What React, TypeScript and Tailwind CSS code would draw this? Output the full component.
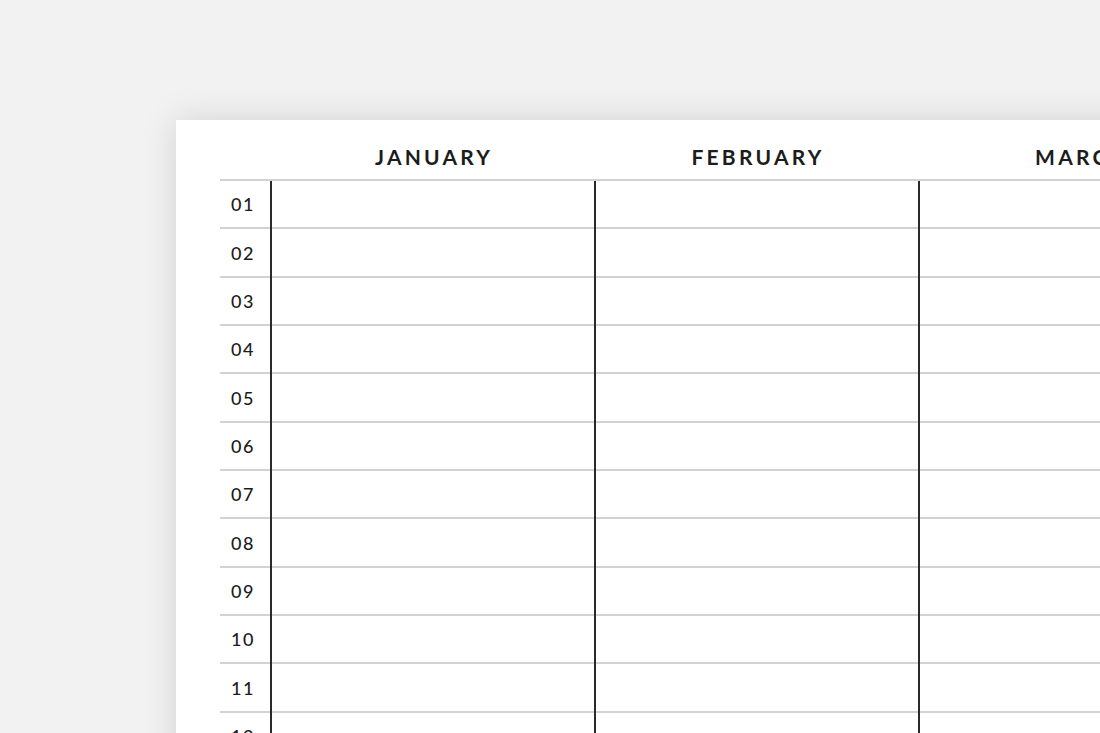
import React from "react";

const months = ["JANUARY", "FEBRUARY", "MARCH"];
const days = Array.from({ length: 14 }, (_, i) => String(i + 1).padStart(2, "0"));

const App: React.FC = () => {
  return (
    <div
      className="w-[1100px] h-[733px] overflow-hidden bg-[#f2f2f2] pt-[120px] pl-[176px]"
      style={{ fontFamily: "Lato, 'Noto Sans', sans-serif" }}
    >
      <div className="w-[1100px] h-[900px] bg-white pl-[44px] shadow-[0_0_34px_rgba(0,0,0,0.13)]">
        {/* Month headers */}
        <div className="flex h-[61px] border-b-2 border-[#d2d2d2]">
          <div className="w-[50px] shrink-0"></div>
          {months.map((m) => (
            <div
              key={m}
              className="w-[324px] shrink-0 pt-[25px] pl-[4px] text-center text-[21px] leading-[24px] font-bold tracking-[3.2px] text-[#1c1c1c]"
            >
              {m}
            </div>
          ))}
        </div>

        {/* Day rows */}
        <div className="flex">
          <div className="w-[50px] shrink-0">
            {days.map((d) => (
              <div
                key={d}
                className="h-[48.35px] border-b-2 border-[#d2d2d2] flex items-center pl-[11px] pt-[1px] text-[18px] tracking-[1.6px] font-medium text-[#1c1c1c]"
              >
                {d}
              </div>
            ))}
          </div>
          {months.map((m) => (
            <div key={m} className="w-[324px] shrink-0 border-l-2 border-[#2a2a2a]">
              {days.map((d) => (
                <div key={d} className="h-[48.35px] border-b-2 border-[#d2d2d2]"></div>
              ))}
            </div>
          ))}
        </div>
      </div>
    </div>
  );
};

export default App;
